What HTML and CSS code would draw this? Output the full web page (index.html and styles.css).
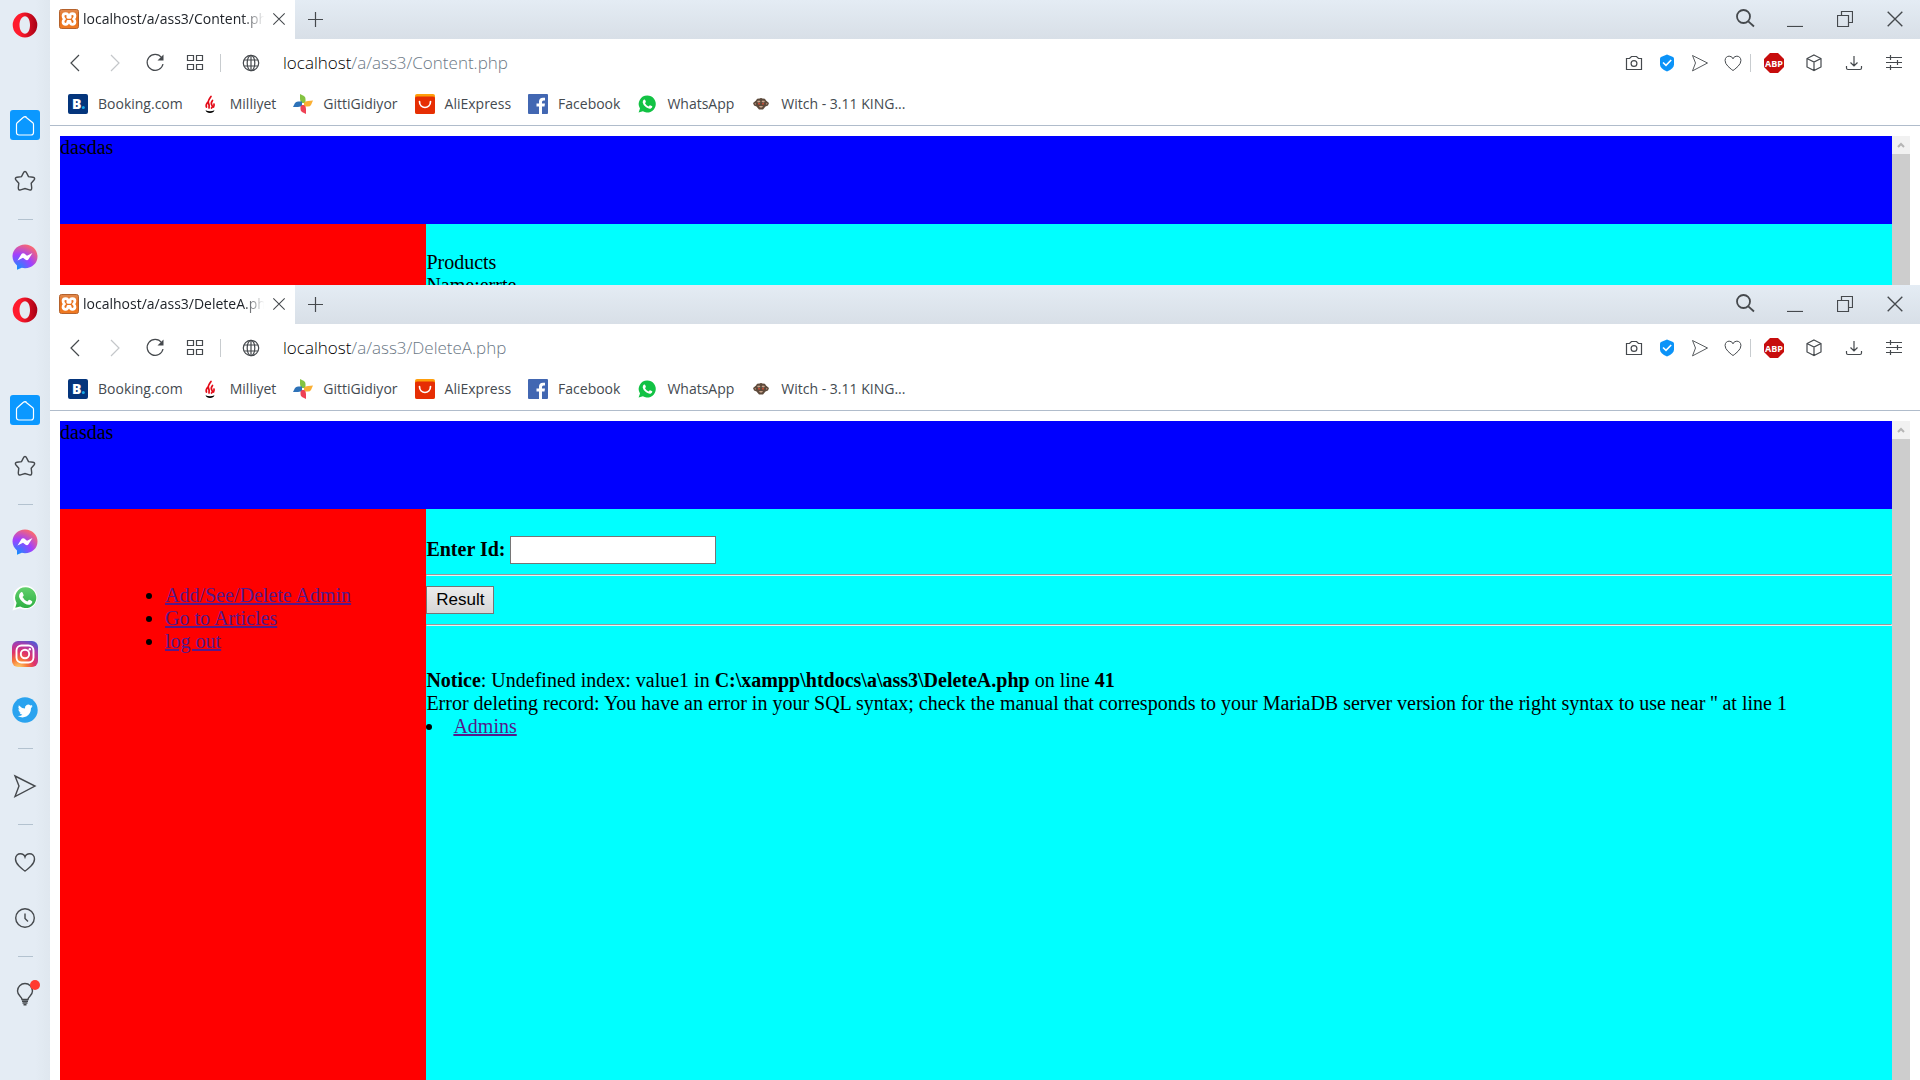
FILE: index.html
```html
<!DOCTYPE html>
<html lang="en">
<head>
<meta charset="utf-8">
<title>localhost/a/ass3/DeleteA.php</title>
<link rel="stylesheet" href="styles.css">
</head>
<body>
<svg class="sprite" aria-hidden="true">
  <defs>
    <linearGradient id="g-opera" x1="0" x2="1" y1="0" y2="0"><stop offset=".3" stop-color="#ff1b2d"/><stop offset="1" stop-color="#a70014"/></linearGradient>
    <radialGradient id="g-msg" cx=".2" cy="1" r="1.1"><stop offset="0" stop-color="#0a94ff"/><stop offset=".55" stop-color="#a040ff"/><stop offset="1" stop-color="#ff6a68"/></radialGradient>
    <linearGradient id="g-wa" x1="0" x2="0" y1="0" y2="1"><stop offset="0" stop-color="#62d06c"/><stop offset="1" stop-color="#2fb043"/></linearGradient>
    <radialGradient id="g-ig" cx=".25" cy="1.05" r="1.15"><stop offset="0" stop-color="#ffd972"/><stop offset=".3" stop-color="#f77737"/><stop offset=".55" stop-color="#e0336a"/><stop offset=".8" stop-color="#b03aa8"/><stop offset="1" stop-color="#5858d0"/></radialGradient>
    <linearGradient id="g-xampp" x1="0" x2="0" y1="0" y2="1"><stop offset="0" stop-color="#e08a50"/><stop offset=".4" stop-color="#e8701c"/><stop offset="1" stop-color="#f07a22"/></linearGradient>

    <symbol id="i-opera" viewBox="0 0 26 26"><path fill="url(#g-opera)" fill-rule="evenodd" d="M13 .5a12.300 12.500 0 1 0 0 25a12.300 12.500 0 1 0 0-25zM13 4.200c3 0 5 3.900 5 8.800s-2 8.800-5 8.800s-5.500-3.900-5.500-8.800s2.500-8.800 5.500-8.800z"/></symbol>
    <symbol id="i-home" viewBox="0 0 30 30"><path d="M15 6.500L22.800 12.800Q23.500 13.400 23.500 14.400V22.500Q23.500 25 21 25H9Q6.500 25 6.500 22.500V14.400Q6.500 13.400 7.200 12.800L13.400 7.300Q15 5.800 16.600 7.300"/></symbol>
    <symbol id="i-star" viewBox="0 0 24 24"><path d="M12 2.500Q13 2.500 13.600 3.900L15.500 7.600L20 8.300Q22.700 8.900 21 11L18.200 14.200L18.700 18.700Q18.800 21.700 16.400 20.900L12 19.600L7.600 20.900Q5.200 21.700 5.300 18.700L5.800 14.200L3 11Q1.300 8.900 4 8.300L8.500 7.600L10.400 3.900Q11 2.500 12 2.500Z"/></symbol>
    <symbol id="i-messenger" viewBox="0 0 26 26"><path fill="url(#g-msg)" d="M13 .5C6 .5.500 5.700.500 12.500c0 3.600 1.900 6.700 4.500 8.900V25.800l4.800-2c1 .3 2.100.4 3.200.4c7 0 12.500-5 12.500-11.700S20 .5 13 .5z"/><path fill="#fff" d="M5.500 16.500L9.500 10q1.200-1.500 2.800-.4L15 11.700L20.500 9L16.500 15.200q-1.200 1.700-2.900.5L11 13.700z"/></symbol>
    <symbol id="i-whatsapp" viewBox="0 0 26 26"><path fill="#fff" d="M13.500.500A12 12 0 0 0 2.500 18L.500 25.500L8 23.300A12 12 0 1 0 13.500.500z"/><path fill="url(#g-wa)" d="M13.500 2.300A10.400 10.400 0 0 0 4.600 18L3.300 22.700L8.200 21.400A10.400 10.400 0 1 0 13.500 2.300z"/><path fill="#fff" d="M9 7.200q1.200-.5 1.700.6l1 2.400q.1.500-1.200 1.900q1.700 3.200 4.800 4.500l1.500-1.700q.4-.3 3.400 1.400q.6 1.700-1.400 3q-2.300 1.500-6.500-1Q7.500 15 7 11.300Q6.900 8.700 9 7.200z"/></symbol>
    <symbol id="i-instagram" viewBox="0 0 26 26"><rect width="26" height="26" rx="6" fill="url(#g-ig)"/><g fill="none" stroke="#fff" stroke-width="1.900"><rect x="4.500" y="4.500" width="17" height="17" rx="5"/><circle cx="13" cy="13" r="4.200"/></g><circle cx="17.800" cy="8.200" r="1.200" fill="#fff"/></symbol>
    <symbol id="i-twitter" viewBox="0 0 26 26"><circle cx="13" cy="13" r="12.700" fill="#2aa3ef"/><path fill="#fff" d="M20.500 9l-1.500.5q1-.6 1.300-1.600l-1.900.7a3.200 3.200 0 0 0-5.400 2.900Q9.200 11.300 6.800 8.300q-1.200 2.500.9 4.300l-1.400-.4q.1 2.400 2.500 3.200l-1.400.1q.7 1.900 3 2.200q-2 1.500-4.700 1.300q4.300 2.500 8.600.6Q19 17 19 11.100Q20 10.300 20.500 9z"/></symbol>
    <symbol id="i-send" viewBox="0 0 24 24"><path d="M2 2L22 12L2 22.500L6 12Z"/></symbol>
    <symbol id="i-heart" viewBox="0 0 24 24"><path d="M12 21Q10.800 20.500 6 16Q2.500 12.600 2.500 9C2.500 5.500 5 3.800 7.400 3.800Q11 3.800 12 7Q13 3.800 16.600 3.800C19 3.800 21.500 5.500 21.500 9Q21.500 12.600 18 16Q13.200 20.500 12 21Z"/></symbol>
    <symbol id="i-clock" viewBox="0 0 24 24"><circle cx="12" cy="12" r="9.300"/><path d="M12 7.500V12.500L15 15.500"/></symbol>
    <symbol id="i-bulb" viewBox="0 0 24 24"><path d="M9 17.500C9 14.500 4.500 13.500 4.500 9a7.500 7.500 0 0 1 15 0C19.500 13.500 15 14.500 15 17.500ZM9 19.300H15M9.500 21H14.500M10.500 22.700H13.500"/></symbol>

    <symbol id="i-xampp" viewBox="0 0 20 20"><rect x=".5" y=".5" width="19" height="19" rx="2" fill="url(#g-xampp)" stroke="#b5622c"/><path fill="none" stroke="#fff" stroke-width="2.800" stroke-linejoin="round" d="M8.800 8.300C9.500 5.500 8.300 4.700 6.500 4.700C3.300 4.700 3.500 8.500 5.500 10C3.500 11.500 3.300 15.300 6.500 15.300C8.600 15.300 9 14.300 9 12.300H11C11 14.300 11.400 15.300 13.500 15.300C16.700 15.300 16.500 11.500 14.500 10C16.500 8.500 16.700 4.700 13.500 4.700C11.700 4.700 10.500 5.500 11.200 8.300Z"/></symbol>
    <symbol id="i-close" viewBox="0 0 16 16"><path d="M1.500 1.500L14.500 14.500M14.500 1.500L1.500 14.500"/></symbol>
    <symbol id="i-plus" viewBox="0 0 16 16"><path d="M8.500 1V16M1 8.500H16"/></symbol>
    <symbol id="i-search" viewBox="0 0 20 20"><circle cx="8.500" cy="7.500" r="6.500"/><path d="M13.300 12.300L19 17.500"/></symbol>
    <symbol id="i-min" viewBox="0 0 16 16"><path d="M0 15.500H16"/></symbol>
    <symbol id="i-restore" viewBox="0 0 16 16"><path d="M.5 4.500H11.500V15.500H.500ZM4.500 4.500V.500H15.500V11.500H11.500"/></symbol>

    <symbol id="i-back" viewBox="0 0 20 20"><path d="M14 2L6 10L14 18"/></symbol>
    <symbol id="i-forward" viewBox="0 0 20 20"><path d="M6 2L14 10L6 18"/></symbol>
    <symbol id="i-reload" viewBox="0 0 20 20"><path d="M16.500 4.500A8 8 0 1 0 18 11"/><path fill="#45494d" stroke="none" d="M18.500 1.500V7.500H12.500Z"/></symbol>
    <symbol id="i-grid" viewBox="0 0 18 18"><path d="M1.500 1.500H7.500V6.500H1.500ZM10.500 1.500H16.500V6.500H10.500ZM1.500 10.500H7.500V15.500H1.500ZM10.500 10.500H16.500V15.500H10.500Z"/></symbol>
    <symbol id="i-globe" viewBox="0 0 18 18"><circle cx="9" cy="9" r="7.700"/><ellipse cx="9" cy="9" rx="3.800" ry="7.700"/><path d="M9 1V17M2 6H16M2 12H16"/></symbol>
    <symbol id="i-camera" viewBox="0 0 18 18"><path d="M1.500 4.500H4.500L6.500 2.500H11.500L13.500 4.500H16.500V15.500H1.500Z"/><circle cx="9" cy="9.500" r="2.900"/></symbol>
    <symbol id="i-shield" viewBox="0 0 16 18"><path fill="#0b93f8" d="M8 .5L14 3q1 .5 1 1.500v6q0 4-7 7q-7-3-7-7v-6Q1 3.500 2 3z"/><path fill="none" stroke="#fff" stroke-width="1.600" d="M4 8.500L7 11.300L12.200 6"/></symbol>
    <symbol id="i-abp" viewBox="0 0 20 20"><path fill="#c70d0d" d="M6 0H14L20 6V14L14 20H6L0 14V6Z"/><text x="10" y="13.700" text-anchor="middle" class="abp-text">ABP</text></symbol>
    <symbol id="i-cube" viewBox="0 0 18 18"><path d="M9 1L16 4.500V13L9 16.500L2 13V4.500ZM2 4.500L9 8L16 4.500M9 8V16.500"/></symbol>
    <symbol id="i-download" viewBox="0 0 18 18"><path d="M9 2V12M5.500 8.500L9 12L12.500 8.500M1.500 12V14Q1.500 15.500 3 15.500H15Q16.500 15.500 16.500 14V12"/></symbol>
    <symbol id="i-settings" viewBox="0 0 18 18"><path d="M1 3.500H17M1 8.500H17M1 13.500H17M5.500 1V6M12.500 6V11M5.500 11V16"/></symbol>

    <symbol id="b-booking" viewBox="0 0 20 20"><rect width="20" height="20" rx="2" fill="#04357c"/><text x="4" y="15" class="booking-text">B</text><circle cx="15.300" cy="13.500" r="1.500" fill="#17a7e8"/></symbol>
    <symbol id="b-milliyet" viewBox="0 0 20 20"><path fill="none" stroke="#e30a17" stroke-width="1.700" stroke-linecap="round" d="M11 2.500Q7.500 7 8.500 9T9 14M7.500 8.500Q5.500 11 6.500 13M12.500 6.500Q10.500 9 11.800 11T11.500 14M14 10Q14.300 11.500 13.500 13"/><path d="M5.500 16.300Q10 18 14.500 16.300Q13.500 19 10 19T5.500 16.300Z"/></symbol>
    <symbol id="b-gitti" viewBox="0 0 20 20"><path fill="#84c341" d="M7 0L11 2Q12.500 3 12.500 5V9H9Q7 8 7 5Z"/><path fill="#fbb034" d="M20 6.500L18 11Q17 12.500 15 12.500H11V9Q12 7 15 7Z"/><path fill="#ee4155" d="M13 20L9 18Q7.500 17 7.500 15V11H11Q13 12 13 15Z"/><path fill="#2d72b8" d="M0 13L2 9Q3 7.500 5 7.500H9V11Q8 13 5 13Z"/></symbol>
    <symbol id="b-ali" viewBox="0 0 20 20"><rect width="20" height="20" rx="2" fill="#ff9e0b"/><path fill="#e62e04" d="M0 4Q0 2.500 2 2.500H18Q20 2.500 20 4V18Q20 20 18 20H2Q0 20 0 18Z"/><path fill="none" stroke="#fff" stroke-width="1.700" stroke-linecap="round" d="M4.500 7.500C4.500 15.500 15.500 15.500 15.500 7.500"/></symbol>
    <symbol id="b-facebook" viewBox="0 0 20 20"><rect width="20" height="20" rx="1" fill="#4267b2"/><path fill="#fff" d="M11 20V12.500H8.500V9.500H11V7.500Q11 3.700 15 3.700H17V6.500H15.500Q14 6.500 14 8V9.500H17L16.500 12.500H14V20Z"/></symbol>
    <symbol id="b-whatsapp" viewBox="0 0 20 20"><path fill="#12c244" d="M10.200 1.500A8.500 8.500 0 0 0 3 14.500L1.600 18.600L5.900 17.300A8.500 8.500 0 1 0 10.200 1.500z"/><path fill="#fff" d="M7 5.500q1-.2 1.200.6l.7 1.700q.1.400-.9 1.400q1.300 2.300 3.600 3.300l1.200-1.300q.3-.2 2.500 1.100q.2 1.500-1.400 2.200q-1.800.7-4.800-1.200Q6 11 5.700 8.500Q5.600 6.500 7 5.500z"/></symbol>
    <symbol id="b-witch" viewBox="0 0 20 20"><path fill="#5d4a3b" d="M5 6.500Q6 4 8 4.700Q10 3.500 12 4.700Q14 4 15 6.500L18 9L17 11.500L14.500 12.500L12 15.500H8L5.500 12.500L3 11.500L2 9Z"/><path fill="#c9a58d" d="M6 7L8.500 6.500L9.500 8L7 8.500ZM11.500 6.500L14 7L13 8.500L10.500 8ZM8 12H12L11 13.500H9ZM3.500 9L5 9.500L4.500 11ZM16.500 9L15 9.500L15.500 11Z"/><path fill="#c24a35" d="M7 9H9V10.500H7ZM11 9H13V10.500H11Z"/></symbol>
  </defs>
</svg>

<section class="window window-back">
  <nav class="sidebar" aria-label="Sidebar">
    <button class="side-item opera" aria-label="Menu"><svg width="26" height="26"><use href="#i-opera"/></svg></button>
    <button class="side-item" aria-label="Home"><svg class="home" width="30" height="30"><use href="#i-home"/></svg></button>
    <button class="side-item" aria-label="Bookmarks"><svg class="line" width="24" height="24"><use href="#i-star"/></svg></button>
    <hr class="side-sep">
    <button class="side-item" aria-label="Messenger"><svg width="26" height="26"><use href="#i-messenger"/></svg></button>
  </nav>
  <div class="main">
    <div class="tabs">
      <div class="tab">
        <svg width="20" height="20"><use href="#i-xampp"/></svg>
        <span class="tab-title">localhost/a/ass3/Content.php</span>
        <button class="tab-close" aria-label="Close tab"><svg class="line" width="14" height="14"><use href="#i-close"/></svg></button>
      </div>
      <button class="new-tab" aria-label="New tab"><svg class="line" width="16" height="16"><use href="#i-plus"/></svg></button>
      <div class="controls">
        <button aria-label="Search tabs"><svg class="line bold" width="20" height="20"><use href="#i-search"/></svg></button>
        <button aria-label="Minimize"><svg class="line" width="16" height="16"><use href="#i-min"/></svg></button>
        <button aria-label="Restore"><svg class="line" width="16" height="16"><use href="#i-restore"/></svg></button>
        <button aria-label="Close"><svg class="line" width="18" height="18"><use href="#i-close"/></svg></button>
      </div>
    </div>
    <div class="toolbar">
      <button class="wide" aria-label="Back"><svg class="line" width="20" height="20"><use href="#i-back"/></svg></button>
      <button class="wide" aria-label="Forward"><svg class="line faded" width="20" height="20"><use href="#i-forward"/></svg></button>
      <button class="wide" aria-label="Reload"><svg class="line" width="20" height="20"><use href="#i-reload"/></svg></button>
      <button class="wide" aria-label="Tabs overview"><svg class="line" width="18" height="18"><use href="#i-grid"/></svg></button>
      <span class="divider"></span>
      <button class="wide" aria-label="Site information"><svg class="line" width="18" height="18"><use href="#i-globe"/></svg></button>
      <div class="address"><span class="host">localhost</span>/a/ass3/Content.php</div>
      <button aria-label="Snapshot"><svg class="line" width="18" height="18"><use href="#i-camera"/></svg></button>
      <button aria-label="Ad blocker"><svg width="16" height="18"><use href="#i-shield"/></svg></button>
      <button aria-label="Send"><svg class="line" width="18" height="18"><use href="#i-send"/></svg></button>
      <button aria-label="Save"><svg class="line" width="20" height="20"><use href="#i-heart"/></svg></button>
      <span class="divider near"></span>
      <button class="wide" aria-label="Adblock Plus"><svg width="20" height="20"><use href="#i-abp"/></svg></button>
      <button class="wide" aria-label="Extensions"><svg class="line" width="18" height="18"><use href="#i-cube"/></svg></button>
      <button class="wide" aria-label="Downloads"><svg class="line" width="18" height="18"><use href="#i-download"/></svg></button>
      <button class="wide" aria-label="Easy setup"><svg class="line" width="18" height="18"><use href="#i-settings"/></svg></button>
    </div>
    <nav class="bookmarks" aria-label="Bookmarks bar">
      <a href="#"><svg width="20" height="20"><use href="#b-booking"/></svg>Booking.com</a>
      <a href="#"><svg width="20" height="20"><use href="#b-milliyet"/></svg>Milliyet</a>
      <a href="#"><svg width="20" height="20"><use href="#b-gitti"/></svg>GittiGidiyor</a>
      <a href="#"><svg width="20" height="20"><use href="#b-ali"/></svg>AliExpress</a>
      <a href="#"><svg width="20" height="20"><use href="#b-facebook"/></svg>Facebook</a>
      <a href="#"><svg width="20" height="20"><use href="#b-whatsapp"/></svg>WhatsApp</a>
      <a href="#"><svg width="20" height="20"><use href="#b-witch"/></svg>Witch - 3.11 KING...</a>
    </nav>
    <div class="viewport">
      <div class="page">
        <header class="banner">dasdas</header>
        <aside class="menu"></aside>
        <main class="content">
          <div>Products</div>
          <div>Name:errte</div>
        </main>
      </div>
      <div class="scrollbar"><span class="scroll-up"><svg width="8" height="6" viewBox="0 0 8 6"><path d="M1 5L4 2L7 5"/></svg></span></div>
    </div>
  </div>
</section>

<section class="window window-front">
  <nav class="sidebar" aria-label="Sidebar">
    <button class="side-item opera" aria-label="Menu"><svg width="26" height="26"><use href="#i-opera"/></svg></button>
    <button class="side-item" aria-label="Home"><svg class="home" width="30" height="30"><use href="#i-home"/></svg></button>
    <button class="side-item" aria-label="Bookmarks"><svg class="line" width="24" height="24"><use href="#i-star"/></svg></button>
    <hr class="side-sep">
    <button class="side-item" aria-label="Messenger"><svg width="26" height="26"><use href="#i-messenger"/></svg></button>
    <button class="side-item" aria-label="WhatsApp"><svg width="26" height="26"><use href="#i-whatsapp"/></svg></button>
    <button class="side-item" aria-label="Instagram"><svg width="26" height="26"><use href="#i-instagram"/></svg></button>
    <button class="side-item" aria-label="Twitter"><svg width="26" height="26"><use href="#i-twitter"/></svg></button>
    <hr class="side-sep">
    <button class="side-item" aria-label="My Flow"><svg class="line" width="24" height="24"><use href="#i-send"/></svg></button>
    <hr class="side-sep">
    <button class="side-item" aria-label="Favourites"><svg class="line" width="24" height="24"><use href="#i-heart"/></svg></button>
    <button class="side-item" aria-label="History"><svg class="line" width="24" height="24"><use href="#i-clock"/></svg></button>
    <hr class="side-sep">
    <button class="side-item tips" aria-label="Tips"><svg class="line" width="24" height="24"><use href="#i-bulb"/></svg><span class="dot"></span></button>
  </nav>
  <div class="main">
    <div class="tabs">
      <div class="tab">
        <svg width="20" height="20"><use href="#i-xampp"/></svg>
        <span class="tab-title">localhost/a/ass3/DeleteA.php</span>
        <button class="tab-close" aria-label="Close tab"><svg class="line" width="14" height="14"><use href="#i-close"/></svg></button>
      </div>
      <button class="new-tab" aria-label="New tab"><svg class="line" width="16" height="16"><use href="#i-plus"/></svg></button>
      <div class="controls">
        <button aria-label="Search tabs"><svg class="line bold" width="20" height="20"><use href="#i-search"/></svg></button>
        <button aria-label="Minimize"><svg class="line" width="16" height="16"><use href="#i-min"/></svg></button>
        <button aria-label="Restore"><svg class="line" width="16" height="16"><use href="#i-restore"/></svg></button>
        <button aria-label="Close"><svg class="line" width="18" height="18"><use href="#i-close"/></svg></button>
      </div>
    </div>
    <div class="toolbar">
      <button class="wide" aria-label="Back"><svg class="line" width="20" height="20"><use href="#i-back"/></svg></button>
      <button class="wide" aria-label="Forward"><svg class="line faded" width="20" height="20"><use href="#i-forward"/></svg></button>
      <button class="wide" aria-label="Reload"><svg class="line" width="20" height="20"><use href="#i-reload"/></svg></button>
      <button class="wide" aria-label="Tabs overview"><svg class="line" width="18" height="18"><use href="#i-grid"/></svg></button>
      <span class="divider"></span>
      <button class="wide" aria-label="Site information"><svg class="line" width="18" height="18"><use href="#i-globe"/></svg></button>
      <div class="address"><span class="host">localhost</span>/a/ass3/DeleteA.php</div>
      <button aria-label="Snapshot"><svg class="line" width="18" height="18"><use href="#i-camera"/></svg></button>
      <button aria-label="Ad blocker"><svg width="16" height="18"><use href="#i-shield"/></svg></button>
      <button aria-label="Send"><svg class="line" width="18" height="18"><use href="#i-send"/></svg></button>
      <button aria-label="Save"><svg class="line" width="20" height="20"><use href="#i-heart"/></svg></button>
      <span class="divider near"></span>
      <button class="wide" aria-label="Adblock Plus"><svg width="20" height="20"><use href="#i-abp"/></svg></button>
      <button class="wide" aria-label="Extensions"><svg class="line" width="18" height="18"><use href="#i-cube"/></svg></button>
      <button class="wide" aria-label="Downloads"><svg class="line" width="18" height="18"><use href="#i-download"/></svg></button>
      <button class="wide" aria-label="Easy setup"><svg class="line" width="18" height="18"><use href="#i-settings"/></svg></button>
    </div>
    <nav class="bookmarks" aria-label="Bookmarks bar">
      <a href="#"><svg width="20" height="20"><use href="#b-booking"/></svg>Booking.com</a>
      <a href="#"><svg width="20" height="20"><use href="#b-milliyet"/></svg>Milliyet</a>
      <a href="#"><svg width="20" height="20"><use href="#b-gitti"/></svg>GittiGidiyor</a>
      <a href="#"><svg width="20" height="20"><use href="#b-ali"/></svg>AliExpress</a>
      <a href="#"><svg width="20" height="20"><use href="#b-facebook"/></svg>Facebook</a>
      <a href="#"><svg width="20" height="20"><use href="#b-whatsapp"/></svg>WhatsApp</a>
      <a href="#"><svg width="20" height="20"><use href="#b-witch"/></svg>Witch - 3.11 KING...</a>
    </nav>
    <div class="viewport">
      <div class="page">
        <header class="banner">dasdas</header>
        <aside class="menu">
          <ul>
            <li><a href="#">Add/See/Delete Admin</a></li>
            <li><a href="#">Go to Articles</a></li>
            <li><a href="#">log out</a></li>
          </ul>
        </aside>
        <main class="content">
          <form>
            <div class="field"><label for="value1">Enter Id:</label><input type="text" id="value1"></div>
            <hr>
            <button type="button" class="submit">Result</button>
            <hr>
          </form>
          <div class="notice"><b>Notice</b>: Undefined index: value1 in <b>C:\xampp\htdocs\a\ass3\DeleteA.php</b> on line <b>41</b></div>
          <div>Error deleting record: You have an error in your SQL syntax; check the manual that corresponds to your MariaDB server version for the right syntax to use near '' at line 1</div>
          <ul class="admins"><li><a href="#">Admins</a></li></ul>
        </main>
      </div>
      <div class="scrollbar"><span class="scroll-up"><svg width="8" height="6" viewBox="0 0 8 6"><path d="M1 5L4 2L7 5"/></svg></span></div>
    </div>
  </div>
</section>
</body>
</html>
```
FILE: styles.css
```css
* {
  box-sizing: border-box;
}

body {
  margin: 0;
  height: 100vh;
  display: grid;
  grid-template-rows: 285px 1fr;
  overflow: hidden;
  background: #fff;
  font-family: "Open Sans", sans-serif;
}

button {
  border: 0;
  padding: 0;
  background: none;
  display: flex;
  align-items: center;
  justify-content: center;
}

svg {
  display: block;
  flex: none;
}

.sprite {
  position: absolute;
  width: 0;
  height: 0;
}

.line {
  fill: none;
  stroke: #45494d;
  stroke-width: 1.2;
}

.bold {
  stroke-width: 1.8;
}

.faded {
  stroke: #c4c7ca;
}

.abp-text {
  font: bold 9px "Open Sans", sans-serif;
  fill: #fff;
}

.booking-text {
  font: 800 14px "Open Sans", sans-serif;
  fill: #fff;
}

.window {
  display: flex;
  min-height: 0;
  overflow: hidden;
  background: #fff;
}

/* Sidebar */
.sidebar {
  flex: 0 0 50px;
  display: flex;
  flex-direction: column;
  background: linear-gradient(to right, #e4ecf4 70%, #dfe7ef);
}

.side-item {
  flex: none;
  height: 56px;
}

.opera {
  height: 50px;
  margin-bottom: 47px;
}

.home {
  border-radius: 3px;
  background: #0b98ff;
  fill: none;
  stroke: #fff;
  stroke-width: 1.2;
}

.sidebar .line {
  stroke-width: 1.4;
}

.side-sep {
  width: 15px;
  margin: 10px 17px 9px 18px;
  border: 0;
  border-top: 1px solid #b3c2cf;
}

.tips {
  position: relative;
}

.dot {
  position: absolute;
  top: 14px;
  right: 10px;
  width: 10px;
  height: 10px;
  border-radius: 50%;
  background: #ff3b30;
}

/* Tab strip */
.main {
  flex: 1;
  min-width: 0;
  display: flex;
  flex-direction: column;
}

.tabs {
  flex: 0 0 39px;
  display: flex;
  background: linear-gradient(#e4ecf4, #d8dfe7);
}

.tab {
  width: 245px;
  padding: 0 9px 2px 9px;
  display: flex;
  align-items: center;
  gap: 4px;
  background: #fff;
}

.tab-title {
  flex: 1;
  overflow: hidden;
  white-space: nowrap;
  font-size: 14px;
  line-height: 20px;
  color: #20242a;
  mask-image: linear-gradient(to right, #000 86%, transparent 98%);
}

.tab-close {
  width: 14px;
}

.new-tab {
  width: 40px;
  padding-bottom: 2px;
}

.controls {
  margin-left: auto;
  padding-bottom: 2px;
  display: flex;
}

.controls button {
  width: 50px;
}

/* Address bar */
.toolbar {
  flex: 0 0 48px;
  padding: 0 6px 0 5px;
  display: flex;
  align-items: center;
}

.toolbar button {
  width: 33px;
  height: 40px;
}

.toolbar .wide {
  width: 40px;
}

.divider {
  width: 1px;
  height: 18px;
  margin: 0 10px 0 5px;
  background: #c8cccf;
}

.near {
  margin: 0 3px 0 1px;
}

.address {
  flex: 1;
  padding-left: 12px;
  font-size: 17px;
  font-weight: 350;
  line-height: 24px;
  color: #6b7885;
}

.host {
  color: #000;
}

/* Bookmarks bar */
.bookmarks {
  flex: 0 0 39px;
  padding: 0 18px 4px;
  display: flex;
  align-items: center;
  gap: 17px;
  border-bottom: 1px solid #b0bccb;
}

.bookmarks a {
  display: flex;
  align-items: center;
  gap: 10px;
  font-size: 14px;
  line-height: 20px;
  color: #444a50;
  text-decoration: none;
  white-space: nowrap;
}

/* Loaded page */
.viewport {
  flex: 1;
  min-height: 0;
  display: flex;
  padding: 10px 10px 0;
}

.page {
  flex: 1;
  display: grid;
  grid-template-columns: 20% 1fr;
  grid-template-rows: 88px 1fr;
  font-family: "Liberation Serif", serif;
  font-size: 20px;
  line-height: 23px;
  color: #000;
}

.banner {
  grid-column: 1 / -1;
  background: #00f;
}

.menu {
  background: #f00;
}

.menu ul {
  margin: 75px 0 0;
  padding-left: 105px;
}

.page a {
  color: #551a8b;
}

.content {
  padding-top: 27px;
  background: #0ff;
}

.content hr {
  margin: 10px 0;
  border: 1px inset #eee;
}

.field {
  display: flex;
  align-items: center;
  gap: 5px;
  font-weight: bold;
}

.field label {
  padding-bottom: 2px;
}

.field input {
  width: 206px;
  height: 28px;
  border: 1px solid #767676;
  background: #fff;
}

.submit {
  width: 68px;
  height: 28px;
  border: 1px solid #767676;
  background: linear-gradient(#ececec, #d6d6d6);
  font: 17px "Liberation Sans", sans-serif;
  color: #000;
}

.notice {
  margin-top: 43px;
}

.admins {
  margin: 0;
  padding: 0;
  list-style-position: inside;
}

.scrollbar {
  flex: 0 0 18px;
  background: #cdcdcd;
}

.scroll-up {
  height: 18px;
  display: flex;
  align-items: center;
  justify-content: center;
  background: #f1f1f1;
  fill: none;
  stroke: #b5b5b5;
  stroke-width: 2;
}
```
